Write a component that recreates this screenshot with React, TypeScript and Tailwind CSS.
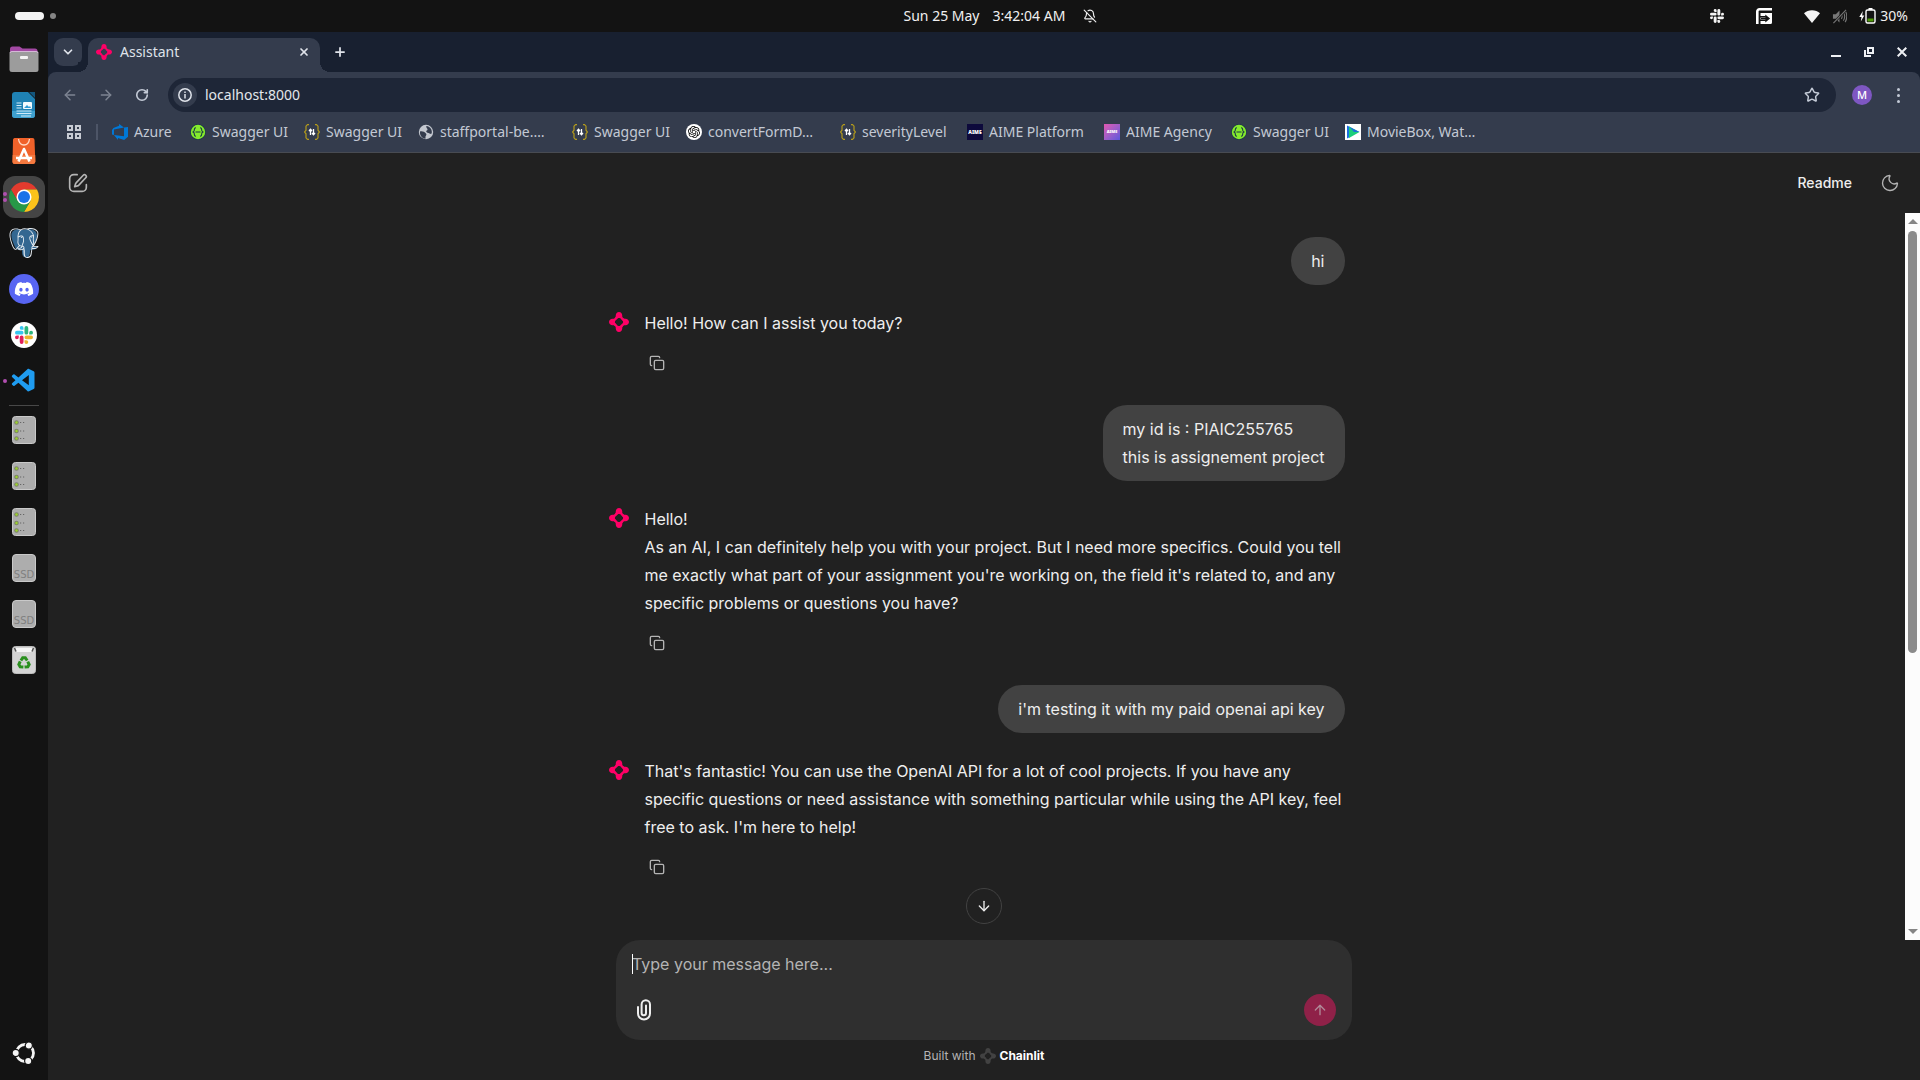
import React from "react";
import {
  ArrowDown,
  ArrowLeft,
  ArrowRight,
  ArrowUp,
  BellOff,
  ChevronDown,
  Copy,
  Moon,
  Plus,
  RotateCw,
  Star,
  X,
} from "lucide-react";
import { SiOpenai, SiPostgresql } from "react-icons/si";
import { FaDiscord } from "react-icons/fa";
import { VscVscode } from "react-icons/vsc";

const UI = "font-['Noto_Sans',sans-serif]";

const SLACK_ARM =
  "M5.042 15.165a2.528 2.528 0 0 1-2.52 2.523A2.528 2.528 0 0 1 0 15.165a2.527 2.527 0 0 1 2.522-2.52h2.52v2.52zM6.313 15.165a2.527 2.527 0 0 1 2.521-2.52 2.527 2.527 0 0 1 2.521 2.52v6.313A2.528 2.528 0 0 1 8.834 24a2.528 2.528 0 0 1-2.521-2.522v-6.313z";

function SlackMark({ colors, className }: { colors: string[]; className: string }) {
  return (
    <svg viewBox="0 0 24 24" className={className} aria-hidden="true">
      {colors.map((c, i) => (
        <path key={i} d={SLACK_ARM} fill={c} transform={`rotate(${i * 90} 12 12)`} />
      ))}
    </svg>
  );
}

function ChainlitMark({ className }: { className: string }) {
  return (
    <svg viewBox="0 0 24 24" className={className} fill="currentColor" aria-hidden="true">
      {[0, 90, 180, 270].map((a) => (
        <path
          key={a}
          transform={`rotate(${a} 12 12)`}
          d="M12 0c2.300 0 3.900 1.900 3.900 4.200 0 .9-.1 1.500.3 2.100l2.300 2.300-1.900 1.900L13.500 7.600c-.9-.7-2.100-.7-3 0L8.900 9.100 7.200 7.400C8 6.500 8.100 5.500 8.100 4.200 8.100 1.900 9.700 0 12 0Z"
        />
      ))}
    </svg>
  );
}

function FilesIcon() {
  return (
    <svg viewBox="0 0 30 28" className="h-7 w-[30px]" aria-hidden="true">
      <path d="M1 4a2.500 2.500 0 0 1 2.500-2.500h7l3 2H26A2.500 2.500 0 0 1 28.500 6v6H1Z" fill="#a349a4" />
      <rect x="0.5" y="6" width="29" height="21" rx="2.500" fill="#9c9c9c" />
      <path d="M1 8a2 2 0 0 1 2-1.500h24A2 2 0 0 1 29 8" stroke="#d5b8d8" strokeWidth="1" fill="none" />
      <rect x="11" y="11" width="8" height="3" rx="1" fill="#f4f4f4" />
    </svg>
  );
}

function WriterIcon() {
  return (
    <svg viewBox="0 0 24 28" className="h-7 w-6" aria-hidden="true">
      <path d="M3 1h13l7 7v16a3 3 0 0 1-3 3H3a3 3 0 0 1-3-3V4a3 3 0 0 1 3-3Z" fill="#1f82b4" />
      <path d="M0 20h23v4a3 3 0 0 1-3 3H3a3 3 0 0 1-3-3Z" fill="#3fa0ce" />
      <path d="M17 1h6v6Z" fill="#12567d" />
      <path d="M4.500 12h5M4.500 14.500h5M4.500 17h5M4.500 20h15M4.500 22.500h15M9 25h10" stroke="#cfe9f7" strokeWidth="1.200" />
      <rect x="11" y="11" width="9" height="7" rx="1" fill="#f2fbff" />
      <path d="m12 17 3-3 2 2 1-1 1 2Z" fill="#2e9bd6" />
    </svg>
  );
}

function StoreIcon() {
  return (
    <svg viewBox="0 0 24 28" className="h-7 w-6" aria-hidden="true">
      <path d="M2.500 1h18A2 2 0 0 1 22.500 3l.8 21.500A2.500 2.500 0 0 1 21 27H3a2.500 2.500 0 0 1-2.500-2.500L1 3a2 2 0 0 1 1.500-2Z" fill="#f0622a" />
      <path d="M.7 18h22.500l.2 6.500A2.500 2.500 0 0 1 21 27H3a2.500 2.500 0 0 1-2.500-2.500Z" fill="#f5793f" />
      <path d="M6.500 2c.5 4 2.500 6 5.500 6s5-2 5.500-6" stroke="#ffd9c4" strokeWidth="1.300" fill="none" />
      <path d="M6.500 24.500 12 12l5.500 12.500M4 21h16" stroke="#fff" strokeWidth="2.600" fill="none" strokeLinejoin="round" />
    </svg>
  );
}

function ChromeIcon() {
  return (
    <svg viewBox="2 2 44 44" className="size-[30px]" aria-hidden="true">
      <path d="M4.950 13A22 22 0 0 1 43.050 13H24L14.470 29.500Z" fill="#e33b2e" />
      <path d="M43.050 13A22 22 0 0 1 24 46L33.530 29.500 24 13Z" fill="#fcc21b" />
      <path d="M24 46A22 22 0 0 1 4.950 13L14.470 29.500H33.530Z" fill="#279847" />
      <circle cx="24" cy="24" r="11" fill="#fff" />
      <circle cx="24" cy="24" r="8.800" fill="#1a73e8" />
    </svg>
  );
}

function PostgresIcon() {
  return (
    <span className="relative flex size-[30px] items-center justify-center">
      <svg viewBox="0 0 24 24" className="absolute inset-0 size-full" aria-hidden="true">
        <path
          d="M3 2.500C5.500.5 8.500.8 11 1.500c3-1 8-1.300 10.500 1.500 2.300 3.500-.5 8.500-1.800 11.500 1 .5 3.300 0 2.500 1.500-1 1.500-3.500 1.500-5.200 1.500-.5 3 0 6-3.500 6-3.300 0-3-3.500-3.200-6.500-2 1-4.300.500-5.300-1.500C3 11.500.3 5.500 3 2.500Z"
          fill="#336791"
        />
      </svg>
      <SiPostgresql className="relative size-full text-[#e8eef3]" />
    </span>
  );
}

function DriveIcon() {
  return (
    <svg viewBox="0 0 24 28" className="h-7 w-6" aria-hidden="true">
      <rect x="0.500" y="0.500" width="23" height="27" rx="3" fill="#adadad" stroke="#c9c9c9" />
      {[6.500, 15, 22.500].map((y) => (
        <g key={y}>
          <circle cx="4.500" cy={y} r="2.300" fill="#7d8568" />
          <circle cx="4.500" cy={y} r="1.200" fill="#9bd32a" />
          <path d={`M8 ${y}h1.200M11 ${y}h1.200`} stroke="#666" strokeWidth="1.200" />
        </g>
      ))}
    </svg>
  );
}

function SsdIcon() {
  return (
    <span className="flex h-7 w-6 items-end justify-center overflow-hidden rounded border border-[#c9c9c9] bg-[#adadad] font-['DejaVu_Sans',sans-serif] text-[10px] leading-[13px] text-[#808080]">
      SSD
    </span>
  );
}

function TrashIcon() {
  return (
    <svg viewBox="0 0 24 28" className="h-7 w-6" aria-hidden="true">
      <rect x="0.500" y="0.500" width="23" height="27" rx="3" fill="#d4d4d4" stroke="#bdbdbd" />
      <path d="M3 2h18l-1.500 4h-15Z" fill="#f6f6f6" />
      <path d="M2.500 2 4 5.500M21.500 2 20 5.500" stroke="#555" strokeWidth="1.500" />
      <g fill="none" stroke="#2a8f1e" strokeWidth="3">
        {[0, 120, 240].map((a) => (
          <path key={a} d="M8.900 14.500 10.700 11.800H13.300L15.200 14.500" transform={`rotate(${a} 12 17)`} />
        ))}
      </g>
    </svg>
  );
}

function UbuntuIcon() {
  return (
    <svg viewBox="0 0 24 24" className="size-6" aria-hidden="true">
      <circle cx="13" cy="12" r="8.500" fill="none" stroke="#f5f5f5" strokeWidth="2.800" />
      {[
        [3.700, 12],
        [16.800, 4.600],
        [16.200, 20],
      ].map(([x, y]) => (
        <circle key={x} cx={x} cy={y} r="3.600" fill="#f5f5f5" stroke="#131313" strokeWidth="1.200" />
      ))}
    </svg>
  );
}

function DockItem({ label, active, dots = 0, children }: { label: string; active?: boolean; dots?: number; children: React.ReactNode }) {
  return (
    <button aria-label={label} className="relative flex h-[46px] w-full shrink-0 items-center justify-center">
      {dots > 0 && (
        <span className="absolute inset-y-0 left-[3px] z-10 flex flex-col items-center justify-center gap-[2px]">
          {Array.from({ length: dots }, (_, i) => (
            <span key={i} className="size-1 rounded-full bg-[#b14fb0]" />
          ))}
        </span>
      )}
      <span className={active ? "flex size-[42px] items-center justify-center rounded-xl bg-[#454545]" : "flex size-[42px] items-center justify-center"}>
        {children}
      </span>
    </button>
  );
}

function Dock() {
  return (
    <nav aria-label="Dock" className="flex w-12 shrink-0 flex-col bg-[#131313] pt-1 pb-1">
      <DockItem label="Files"><FilesIcon /></DockItem>
      <DockItem label="Writer"><WriterIcon /></DockItem>
      <DockItem label="App Center"><StoreIcon /></DockItem>
      <DockItem label="Chrome" active dots={2}><ChromeIcon /></DockItem>
      <DockItem label="pgAdmin"><PostgresIcon /></DockItem>
      <DockItem label="Discord">
        <span className="flex size-[30px] items-center justify-center rounded-full bg-[#5865f2] text-white">
          <FaDiscord className="size-5" />
        </span>
      </DockItem>
      <DockItem label="Slack">
        <span className="flex size-[26px] items-center justify-center rounded-full bg-white">
          <SlackMark className="size-[18px]" colors={["#e01e5a", "#36c5f0", "#2eb67d", "#ecb22e"]} />
        </span>
      </DockItem>
      <DockItem label="Code" dots={1}><VscVscode className="size-7 text-[#1f9cf0]" /></DockItem>
      <hr className="mx-[9px] my-px border-t border-[#484848]" />
      <DockItem label="Drive 1"><DriveIcon /></DockItem>
      <DockItem label="Drive 2"><DriveIcon /></DockItem>
      <DockItem label="Drive 3"><DriveIcon /></DockItem>
      <DockItem label="Disk 1"><SsdIcon /></DockItem>
      <DockItem label="Disk 2"><SsdIcon /></DockItem>
      <DockItem label="Trash"><TrashIcon /></DockItem>
      <div className="mt-auto">
        <DockItem label="Show apps"><UbuntuIcon /></DockItem>
      </div>
    </nav>
  );
}

function TopBar() {
  return (
    <header className={`grid h-8 shrink-0 grid-cols-[1fr_auto_1fr] items-center bg-[#131313] text-sm text-[#f0f0f0] ${UI}`}>
      <div className="flex items-center gap-1.5 pl-[15px]">
        <span className="h-2 w-[29px] rounded-full bg-[#f4f4f4]" />
        <span className="size-1.5 rounded-full bg-[#858585]" />
      </div>
      <div className="flex items-center pl-20">
        <span className="w-[89px] whitespace-nowrap">Sun 25 May</span>
        <span className="w-[90px] whitespace-nowrap">3:42:04 AM</span>
        <BellOff className="size-3.5" strokeWidth={2} />
      </div>
      <div className="flex items-center justify-end pr-3">
        <SlackMark className="mr-8 size-3.5" colors={["#f4f4f4", "#f4f4f4", "#f4f4f4", "#f4f4f4"]} />
        <svg viewBox="0 0 16 16" className="mr-8 size-4" aria-hidden="true">
          <path d="M1.300 16V3.500A2.200 2.200 0 0 1 3.500 1.300H16" fill="none" stroke="#fff" strokeWidth="2.600" />
          <path d="M4.500 5H16v9.500a1.500 1.500 0 0 1-1.500 1.500h-10v-3h5.500l-.5-1.500H4.500V9.500H9.500L10 8H4.500Z" fill="#fff" />
          <path d="M5 10.500h6M10 8l3 2.500L10 13Z" fill="#131313" stroke="#131313" strokeWidth="1.400" />
        </svg>
        <svg viewBox="0 0 16 13" className="mr-3 h-[13px] w-4" aria-hidden="true">
          <path d="M0 3.300C4-.8 12-.8 16 3.300L8 13Z" fill="#f4f4f4" />
        </svg>
        <svg viewBox="0 0 16 16" className="mr-3 size-[15px]" fill="none" stroke="#777" aria-hidden="true">
          <path d="M1 5.500h3l4-4v13l-4-4H1Z" fill="#777" stroke="none" />
          <path d="M10 5.500c1 1.200 1 3.800 0 5M12 3.500c2 2 2 7 0 9M14 2c2.300 3 2.300 9 0 12" strokeWidth="1.200" />
          <path d="M1.500 15 15 1" stroke="#131313" strokeWidth="2.500" />
          <path d="M1.500 15 15 1" strokeWidth="1.200" />
        </svg>
        <svg viewBox="0 0 17 16" className="mr-1 h-4 w-[17px]" aria-hidden="true">
          <path d="M3.800 3 .3 9h2.200L1.800 13.500 5.300 7.500H3.200Z" fill="#fff" />
          <path d="M9.500 0h4v2h-4Z" fill="#fff" />
          <rect x="7" y="2" width="9" height="13" rx="1.500" fill="none" stroke="#fff" strokeWidth="1.400" />
          <path d="M8.500 10.500h6v3h-6Z" fill="#4e9a06" />
        </svg>
        <span>30%</span>
      </div>
    </header>
  );
}

function TabStrip() {
  return (
    <div className="flex h-10 shrink-0 items-end bg-[#182030] text-[#dfe3ea]">
      <button aria-label="Search tabs" className="mb-1.5 ml-1.5 flex size-7 items-center justify-center rounded-[9px] bg-[#343c4d]">
        <ChevronDown className="size-3.5" strokeWidth={3} />
      </button>
      <div className="relative ml-1.5 flex h-[34px] w-[232px] items-center rounded-t-[10px] bg-[#343c4d] px-2 pb-1.5">
        <span className="absolute -left-2.5 bottom-0 size-2.5 bg-[radial-gradient(circle_at_0_0,#182030_10px,#343c4d_10px)]" />
        <span className="absolute -right-2.5 bottom-0 size-2.5 bg-[radial-gradient(circle_at_100%_0,#182030_10px,#343c4d_10px)]" />
        <ChainlitMark className="size-4 text-[#ff0066]" />
        <span className="ml-2 flex-1 text-sm leading-5">Assistant</span>
        <button aria-label="Close tab" className="flex size-4 items-center justify-center">
          <X className="size-3" strokeWidth={3.500} />
        </button>
      </div>
      <button aria-label="New tab" className="mb-1.5 ml-1.5 flex size-7 items-center justify-center">
        <Plus className="size-3.5" strokeWidth={3} />
      </button>
      <div className="mb-1.5 ml-auto flex h-7 items-center gap-[23px] pr-[13px] text-white">
        <button aria-label="Minimize" className="flex h-2.5 w-2.5 items-end">
          <span className="h-0.5 w-2.5 bg-[#eef0f4]" />
        </button>
        <button aria-label="Restore">
          <svg viewBox="0 0 10 10" className="size-2.5 fill-none stroke-[#eef0f4] stroke-2">
            <path d="M4 1h5v5H4ZM1 3v6h6" />
          </svg>
        </button>
        <button aria-label="Close window">
          <svg viewBox="0 0 10 10" className="size-2.5 fill-none stroke-[#eef0f4] stroke-2">
            <path d="m.7.700 8.600 8.600M9.300.700.700 9.300" />
          </svg>
        </button>
      </div>
    </div>
  );
}

function AddressBar() {
  return (
    <div className="bg-[#182030]">
      <div className="flex h-[46px] items-center rounded-t-lg bg-[#343c4d] pr-3 pl-3 text-[#c3cad6]">
        <button aria-label="Back" className="mr-4 flex size-5 items-center justify-center text-[#7d8492]">
          <ArrowLeft className="size-4" strokeWidth={2.200} />
        </button>
        <button aria-label="Forward" className="mr-4 flex size-5 items-center justify-center text-[#7d8492]">
          <ArrowRight className="size-4" strokeWidth={2.200} />
        </button>
        <button aria-label="Reload" className="mr-4 flex size-5 items-center justify-center">
          <RotateCw className="size-3.5" strokeWidth={2.800} />
        </button>
        <div className="flex h-[34px] flex-1 items-center rounded-full bg-[#1e2637] pr-4 pl-[5px]">
          <button aria-label="Site information" className="flex size-6 items-center justify-center rounded-full bg-[#343c4d]">
            <svg viewBox="0 0 14 14" className="size-3.5" aria-hidden="true">
              <circle cx="7" cy="7" r="6.200" fill="none" stroke="#dfe3ea" strokeWidth="1.500" />
              <path d="M7 6v4.500M7 3.500V5" stroke="#dfe3ea" strokeWidth="1.500" />
            </svg>
          </button>
          <input aria-label="Address" defaultValue="localhost:8000" className="ml-2 min-w-0 flex-1 bg-transparent text-sm text-[#e3e6ec] outline-none" />
          <button aria-label="Bookmark this page">
            <Star className="size-4" strokeWidth={2.200} />
          </button>
        </div>
        <button aria-label="Profile" className="ml-4 flex size-5 items-center justify-center rounded-full bg-[#7e57c2] text-[11px] font-medium text-white">
          M
        </button>
        <button aria-label="Menu" className="ml-4 flex w-5 flex-col items-center gap-[3px]">
          <span className="size-[3px] rounded-full bg-current" />
          <span className="size-[3px] rounded-full bg-current" />
          <span className="size-[3px] rounded-full bg-current" />
        </button>
      </div>
    </div>
  );
}

const azureIcon = (
  <svg viewBox="0 0 24 24" className="size-4 shrink-0" aria-hidden="true">
    <path d="M0 8.877L2.247 5.910l8.405-3.416V.022l7.370 5.393L2.966 8.338v8.225L0 15.707zm24-4.450v14.651l-5.753 4.900-9.303-3.057v3.056l-5.978-7.416 15.057 1.798V5.415z" fill="#0078d7" />
  </svg>
);
const swaggerIcon = (
  <svg viewBox="0 0 16 16" className="size-4 shrink-0" aria-hidden="true">
    <circle cx="8" cy="8" r="7.800" fill="#173647" />
    <circle cx="8" cy="8" r="7.200" fill="#85ea2d" />
    <path d="M6 3.700c-1.300 0-1.600.6-1.600 1.600 0 1.400 0 2.200-1.200 2.700 1.200.5 1.200 1.300 1.200 2.700 0 1 .3 1.600 1.600 1.600M10 3.700c1.300 0 1.600.6 1.600 1.600 0 1.400 0 2.200 1.200 2.700-1.200.5-1.200 1.300-1.200 2.700 0 1-.3 1.600-1.600 1.600M5.500 8h5" fill="none" stroke="#173647" strokeWidth="1.100" />
  </svg>
);
const bracesIcon = (
  <svg viewBox="0 0 16 16" className="size-4 shrink-0" fill="none" aria-hidden="true">
    <path d="M5 .7H3.500L2 2.200v4L.5 8 2 9.800v4l1.500 1.500H5M11 .7h1.500L14 2.200v4L15.500 8 14 9.800v4l-1.500 1.500H11" stroke="#b39a1c" strokeWidth="1.200" />
    <path d="M6.500 11V5.500M5 7l1.500-1.800L8 7M9.500 5v5.500M8 9l1.500 1.800L11 9" stroke="#fff" strokeWidth="1.300" />
  </svg>
);
const globeIcon = (
  <svg viewBox="0 0 16 16" className="size-4 shrink-0" aria-hidden="true">
    <circle cx="8" cy="8" r="7.200" fill="#c3c7cf" />
    <path d="M2 7.500c2.500-.5 4.500.5 6 2 1 1 0 2-.5 3v2.200C3.800 14.500 1.500 11 2 7.500ZM8.500 2c-1 1.500 1 2 1 3.500 0 1.200-2 1-1 2.500s3 .5 3.500 2l1.700-.500C14.500 6 12.500 2.500 8.500 2Z" fill="#343c4d" />
  </svg>
);
const gptIcon = (
  <span className="flex size-4 shrink-0 items-center justify-center rounded-full bg-white text-black">
    <SiOpenai className="size-3" />
  </span>
);
const movieIcon = (
  <svg viewBox="0 0 16 16" className="size-4 shrink-0" aria-hidden="true">
    <path d="M0 0h16v16H0Z" fill="#fff" />
    <path d="M2 1.500 5 3v10l-3 1.500Z" fill="#1b6fe0" />
    <path d="M4 2.500 14.500 8 4 14Z" fill="#1ccf7a" />
    <path d="M4 2.500 14.500 8H9Z" fill="#1d6fd8" />
  </svg>
);

const bookmarks: { label: string; width: string; icon: React.ReactNode }[] = [
  { label: "Azure", width: "w-[62px]", icon: azureIcon },
  { label: "Swagger UI", width: "w-[98px]", icon: swaggerIcon },
  { label: "Swagger UI", width: "w-[98px]", icon: bracesIcon },
  { label: "staffportal-be.…", width: "w-[138px]", icon: globeIcon },
  { label: "Swagger UI", width: "w-[98px]", icon: bracesIcon },
  { label: "convertFormD…", width: "w-[138px]", icon: gptIcon },
  { label: "severityLevel", width: "w-[111px]", icon: bracesIcon },
  {
    label: "AIME Platform",
    width: "w-[121px]",
    icon: <span aria-hidden="true" className="flex size-4 shrink-0 items-center justify-center bg-[#0d0a3c] text-[5px] font-black text-white">AIME</span>,
  },
  {
    label: "AIME Agency",
    width: "w-[111px]",
    icon: <span aria-hidden="true" className="flex size-4 shrink-0 items-center justify-center bg-linear-to-br from-[#e256b0] to-[#5b55dd] text-[4px] font-black text-white">AIME</span>,
  },
  { label: "Swagger UI", width: "w-[98px]", icon: swaggerIcon },
  { label: "MovieBox, Wat…", width: "w-[138px]", icon: movieIcon },
];

function BookmarksBar() {
  return (
    <div className="flex h-[35px] shrink-0 items-center border-b border-[#484b52] bg-[#343c4d] pb-1.5 pl-[19px] text-[#c3c9d4]">
      <button aria-label="Apps" className="grid size-3.5 grid-cols-2 gap-[2px]">
        <span className="size-1.5 border-2 border-[#c8ccd4]" />
        <span className="size-1.5 border-2 border-[#c8ccd4]" />
        <span className="size-1.5 border-2 border-[#c8ccd4]" />
        <span className="size-1.5 border-2 border-[#c8ccd4]" />
      </button>
      <span className="mr-3.5 ml-[15px] h-4 w-0.5 bg-[#4d5567]" />
      <div className="flex gap-4">
        {bookmarks.map((b, i) => (
          <a key={i} href="#" className={`flex shrink-0 items-center gap-1.5 text-sm leading-5 whitespace-nowrap ${b.width}`}>
            {b.icon}
            {b.label}
          </a>
        ))}
      </div>
    </div>
  );
}

function UserMessage({ lines }: { lines: string[] }) {
  return (
    <div className="self-end rounded-3xl bg-[#424242] px-5 py-2.5">
      {lines.map((l) => (
        <p key={l}>{l}</p>
      ))}
    </div>
  );
}

function AssistantMessage({ lines }: { lines: string[] }) {
  return (
    <article className="flex gap-4">
      <ChainlitMark className="mt-[3px] size-5 shrink-0 text-[#ff0066]" />
      <div className="flex flex-col items-start gap-2">
        <div>
          {lines.map((l) => (
            <p key={l}>{l}</p>
          ))}
        </div>
        <button aria-label="Copy to clipboard" className="flex h-9 w-6 items-center justify-center text-[#b4b4b4]">
          <Copy className="size-4" />
        </button>
      </div>
    </article>
  );
}

function Chat() {
  return (
    <main className="flex min-h-0 flex-1 flex-col bg-[#212121] font-['Inter',sans-serif] text-[#eeeeee]">
      <header className="flex h-[60px] shrink-0 items-center px-5">
        <button aria-label="New chat" className="text-[#b4b4b4]">
          <svg viewBox="0 0 24 24" className="size-5 fill-none stroke-current stroke-2" strokeLinecap="round" strokeLinejoin="round">
            <path d="M11 2H7a5 5 0 0 0-5 5v10a5 5 0 0 0 5 5h10a5 5 0 0 0 5-5v-3" />
            <path d="M18.300 2.700a2.100 2.100 0 0 1 3 3L13 14.500a4 4 0 0 1-1.700 1L8 16.500l1-3.300a4 4 0 0 1 1-1.700Z" />
          </svg>
        </button>
        <button className="mr-7 ml-auto text-sm font-medium">Readme</button>
        <button aria-label="Toggle theme" className="text-[#b4b4b4]">
          <Moon className="size-5" strokeWidth={1.600} />
        </button>
      </header>
      <div className="relative flex min-h-0 flex-1">
        <div className="flex-1 overflow-hidden">
          <div className="mx-auto flex w-full max-w-3xl flex-col gap-6 px-4 pt-6 leading-7">
            <UserMessage lines={["hi"]} />
            <AssistantMessage lines={["Hello! How can I assist you today?"]} />
            <UserMessage lines={["my id is : PIAIC255765", "this is assignement project"]} />
            <AssistantMessage
              lines={[
                "Hello!",
                "As an AI, I can definitely help you with your project. But I need more specifics. Could you tell me exactly what part of your assignment you're working on, the field it's related to, and any specific problems or questions you have?",
              ]}
            />
            <UserMessage lines={["i'm testing it with my paid openai api key"]} />
            <AssistantMessage
              lines={[
                "That's fantastic! You can use the OpenAI API for a lot of cool projects. If you have any specific questions or need assistance with something particular while using the API key, feel free to ask. I'm here to help!",
              ]}
            />
          </div>
        </div>
        <div aria-hidden="true" className="flex w-[15px] shrink-0 flex-col items-center bg-[#fcfcfc] py-1.5">
          <span className="border-x-[5px] border-b-[5px] border-x-transparent border-b-[#858585]" />
          <div className="my-[7px] flex-1">
            <div className="h-[61%] w-[9px] rounded-full bg-[#8b8b8b]" />
          </div>
          <span className="border-x-[5px] border-t-[5px] border-x-transparent border-t-[#858585]" />
        </div>
        <button aria-label="Scroll to bottom" className="absolute bottom-4 left-1/2 flex size-9 -translate-x-1/2 items-center justify-center rounded-full border border-[#424242] bg-[#212121]">
          <ArrowDown className="size-4" />
        </button>
      </div>
      <div className="mx-auto w-full max-w-3xl shrink-0 px-4">
        <form className="rounded-3xl bg-[#2f2f2f] px-4 py-3" onSubmit={(e) => e.preventDefault()}>
          <div className="relative">
            <span aria-hidden="true" className="absolute top-0.5 left-0 h-5 w-px bg-white" />
            <textarea
              aria-label="Message"
              rows={1}
              placeholder="Type your message here..."
              className="block h-6 w-full resize-none bg-transparent leading-6 outline-none placeholder:text-[#b4b4b4]"
            />
          </div>
          <div className="mt-4 flex h-9 items-center justify-between">
            <button type="button" aria-label="Attach files" className="flex size-6 items-center justify-center">
              <svg viewBox="0 0 24 24" className="size-6 fill-none stroke-current stroke-2" strokeLinecap="round">
                <path d="M6 9v6.500a6 6 0 0 0 12 0V6.500a4.200 4.200 0 0 0-8.400 0V15a2.200 2.200 0 0 0 4.400 0V7.500" />
              </svg>
            </button>
            <button aria-label="Send message" className="flex size-8 items-center justify-center rounded-full bg-[#8f2148] text-[#b08a98]">
              <ArrowUp className="size-4" />
            </button>
          </div>
        </form>
        <footer className="flex h-10 items-center justify-center gap-1 pb-2 text-xs text-[#b4b4b4]">
          Built with
          <ChainlitMark className="size-4 text-[#424242]" />
          <span className="font-bold text-white">Chainlit</span>
        </footer>
      </div>
    </main>
  );
}

export default function App() {
  return (
    <div className="flex h-screen flex-col overflow-hidden bg-[#131313]">
      <TopBar />
      <div className="flex min-h-0 flex-1">
        <Dock />
        <div className={`flex min-w-0 flex-1 flex-col ${UI}`}>
          <TabStrip />
          <AddressBar />
          <BookmarksBar />
          <Chat />
        </div>
      </div>
    </div>
  );
}
